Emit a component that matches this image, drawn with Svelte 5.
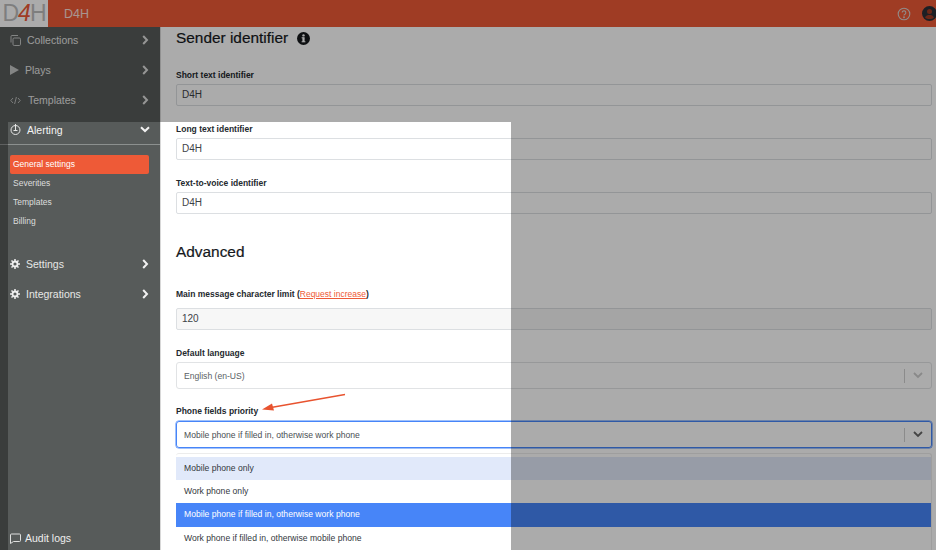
<script>
  const top = [
    { label: 'Collections', icon: 'copy' },
    { label: 'Plays', icon: 'play' },
    { label: 'Templates', icon: 'code' }
  ];
  const subs = ['General settings', 'Severities', 'Templates', 'Billing'];
  const options = [
    { t: 'Mobile phone only', c: 'hover' },
    { t: 'Work phone only', c: '' },
    { t: 'Mobile phone if filled in, otherwise work phone', c: 'sel' },
    { t: 'Work phone if filled in, otherwise mobile phone', c: '' }
  ];
  const lower = ['Settings', 'Integrations'];
</script>

<div class="page">
  <header class="topbar">
    <div class="logo"><span>D</span><span class="four">4</span><span>H</span></div>
    <div class="org">D4H</div>
    <div class="spacer"></div>
    <svg class="help" width="14" height="14" viewBox="0 0 14 14" fill="none" stroke="#d9cfcb" stroke-width="1.1">
      <circle cx="7" cy="7" r="5.8" />
      <path d="M5.2 5.6a1.8 1.8 0 1 1 2.7 1.6c-.6.3-.9.7-.9 1.3" />
      <circle cx="7" cy="10.2" r=".4" />
    </svg>
    <svg class="user" width="15" height="15" viewBox="0 0 15 15">
      <circle cx="7.5" cy="7.5" r="7.5" fill="#2b2f36" />
      <circle cx="7.5" cy="5.6" r="2.5" fill="#9f3b24" />
      <path d="M3 11.4c1-1.7 2.6-2.3 4.5-2.3s3.500.6 4.500 2.300c-1.100 1.100-2.700 1.700-4.500 1.700s-3.400-.6-4.500-1.700z" fill="#9f3b24" />
    </svg>
  </header>

  <div class="body">
    <nav class="side">
      {#each top as item}
        <div class="item">
          <span class="ic">
            {#if item.icon === 'copy'}
              <svg width="11" height="11" viewBox="0 0 11 11" fill="none" stroke="#c4c6c5" stroke-width="1"><rect x="3" y="3" width="7.500" height="7.500" rx="1.200" /><path d="M1 7.500V1.500a1 1 0 0 1 1-1h6" /></svg>
            {:else if item.icon === 'play'}
              <svg width="9" height="10" viewBox="0 0 9 10"><path d="M0 0l9 5-9 5z" fill="#c4c6c5" /></svg>
            {:else}
              <svg width="11" height="9" viewBox="0 0 11 9" fill="none" stroke="#c4c6c5" stroke-width=".9"><path d="M3 2L.8 4.500 3 7M8 2l2.200 2.500L8 7M6.400 1L4.600 8" /></svg>
            {/if}
          </span>
          <span class="lbl" class:plays={item.icon === 'play'} class:tpl={item.icon === 'code'}>{item.label}</span>
          <svg class="chev" width="7" height="10" viewBox="0 0 7 10" fill="none" stroke="#dfe0df" stroke-width="2"><path d="M1.200 1l3.800 4-3.800 4" /></svg>
        </div>
      {/each}
      <div class="item open">
        <span class="ic">
          <svg width="11" height="11" viewBox="0 0 11 11" fill="none" stroke="#e6e7e6" stroke-width="1"><circle cx="5.500" cy="6" r="4.500" /><path d="M5.500 0v6M3.500 6.500h4" /></svg>
        </span>
        <span class="lbl">Alerting</span>
        <svg class="chev down" width="10" height="7" viewBox="0 0 10 7" fill="none" stroke="#f2f2f2" stroke-width="2"><path d="M1 1.200l4 3.800 4-3.800" /></svg>
      </div>
      <div class="subs">
        {#each subs as s, i}
          <div class="sub" class:active={i === 0}>{s}</div>
        {/each}
      </div>
      {#each lower as l}
        <div class="item">
          <span class="ic gear">
            <svg width="10" height="10" viewBox="0 0 10 10" fill="none" stroke="#f0f0f0">
              <circle cx="5" cy="5" r="2.500" stroke-width="1.800" />
              <path d="M5 0v2M5 8v2M0 5h2M8 5h2M1.500 1.500l1.300 1.300M7.200 7.200l1.300 1.300M8.500 1.500L7.200 2.800M2.800 7.200L1.500 8.500" stroke-width="1.500" />
            </svg>
          </span>
          <span class="lbl">{l}</span>
          <svg class="chev" width="7" height="10" viewBox="0 0 7 10" fill="none" stroke="#f2f2f2" stroke-width="2"><path d="M1.200 1l3.800 4-3.800 4" /></svg>
        </div>
      {/each}
      <div class="audit">
        <svg width="11" height="11" viewBox="0 0 11 11" fill="none" stroke="#dfe0df" stroke-width="1"><path d="M1.500 1h8a1 1 0 0 1 1 1v5.500a1 1 0 0 1-1 1H3.500L.5 10.500V2a1 1 0 0 1 1-1z" /></svg>
        <span>Audit logs</span>
      </div>
    </nav>

    <main class="main">
      <h2 class="sender">Sender identifier
        <svg width="13" height="13" viewBox="0 0 13 13"><circle cx="6.500" cy="6.500" r="6.500" fill="#15181c" /><rect x="5.400" y="5.500" width="2.200" height="4.500" fill="#fff" /><rect x="4.600" y="9.300" width="3.800" height="1" fill="#fff" /><rect x="4.600" y="5.300" width="2.800" height="1" fill="#fff" /><circle cx="6.500" cy="3.400" r="1.200" fill="#fff" /></svg>
      </h2>

      <div class="label first">Short text identifier</div>
      <div class="input">D4H</div>
      <div class="label">Long text identifier</div>
      <div class="input">D4H</div>
      <div class="label">Text-to-voice identifier</div>
      <div class="input">D4H</div>

      <h2 class="advanced">Advanced</h2>

      <div class="label limit">Main message character limit (<span class="link">Request increase</span>)</div>
      <div class="input ro">120</div>

      <div class="label lang">Default language</div>
      <div class="select">
        <span class="val">English (en-US)</span>
        <span class="sep"></span>
        <svg class="arrow" width="10" height="7" viewBox="0 0 10 7" fill="none" stroke="#cccccc" stroke-width="1.800"><path d="M1 1l4 4 4-4" /></svg>
      </div>

      <div class="label phone">Phone fields priority</div>
      <div class="select focus">
        <span class="val">Mobile phone if filled in, otherwise work phone</span>
        <span class="sep"></span>
        <svg class="arrow" width="10" height="7" viewBox="0 0 10 7" fill="none" stroke="#666666" stroke-width="1.800"><path d="M1 1l4 4 4-4" /></svg>
      </div>

      <div class="menu">
        {#each options as o}
          <div class="opt {o.c}">{o.t}</div>
        {/each}
      </div>
    </main>
  </div>

  <div class="dim dim-top"></div>
  <div class="dim dim-left"></div>
  <div class="dim dim-right"></div>

  <svg class="callout" width="90" height="24" viewBox="0 0 90 24">
    <path d="M84 1.500L10 14.500" stroke="#e8532f" stroke-width="1.300" fill="none" />
    <path d="M1 16.500L11 10.500 13 17.500z" fill="#e8532f" />
  </svg>
</div>

<style>
  :global(body) {
    margin: 0;
    background: #fff;
  }
  .page {
    position: relative;
    width: 936px;
    height: 550px;
    overflow: hidden;
    font-family: "Liberation Sans", Arial, sans-serif;
    color: #24292e;
    background: #fff;
  }
  .topbar {
    display: flex;
    align-items: center;
    height: 27px;
    background: #ee5a37;
  }
  .logo {
    width: 48px;
    height: 27px;
    background: #fff;
    display: flex;
    align-items: center;
    justify-content: center;
    font-size: 23px;
    font-weight: 400;
    letter-spacing: -1px;
    color: #bdbdbd;
  }
  .four {
    color: #ee5a37;
    font-style: italic;
  }
  .org {
    margin-left: 16px;
    font-size: 12.500px;
    color: #fff;
    opacity: .8;
  }
  .spacer { flex: 1; }
  .help { margin-right: 10px; }
  .user { margin-right: 0; transform: translateX(1px); }

  .body {
    display: flex;
    height: 523px;
  }
  .side {
    position: relative;
    width: 161px;
    flex: none;
    background: #575b5a;
    border-right: 1px solid #d8d8d8;
    box-sizing: border-box;
    color: #e6e7e6;
    font-size: 10.500px;
  }
  .item {
    display: flex;
    align-items: center;
    height: 30px;
    padding-left: 10px;
  }
  .item:first-child { margin-top: -2px; }
  .item .ic {
    width: 17px;
    display: flex;
    align-items: center;
  }
  .item .lbl { flex: 1; }
  .item .lbl.plays { margin-left: -2px; }
  .item .lbl.tpl { margin-left: 1px; }
  .chev { margin-right: 11px; }
  .chev.down { margin-right: 10px; }
  .item.open {
    height: 29px;
    color: #f4f4f4;
    border-bottom: 1px solid #8c908f;
    font-weight: 500;
  }
  .subs {
    padding: 10px 10px 0 10px;
    height: 88px;
    box-sizing: border-box;
    margin-bottom: 16px;
  }
  .sub {
    height: 19px;
    line-height: 19px;
    padding-left: 3px;
    font-size: 8.500px;
    color: #dcdddc;
  }
  .sub.active {
    background: #ee5a37;
    color: #fff;
    border-radius: 2px;
    width: 139px;
    box-sizing: border-box;
  }
  .gear {
    width: 16px !important;
  }
  .audit {
    position: absolute;
    left: 10px;
    bottom: 6px;
    display: flex;
    align-items: center;
    gap: 4px;
    font-size: 10.500px;
    color: #eeeeee;
  }

  .main {
    flex: 1;
    padding: 0 4px 0 15px;
    min-width: 0;
  }
  h2 {
    margin: 0;
    font-weight: 400;
    color: #15181c;
    -webkit-text-stroke: .2px #15181c;
  }
  .sender {
    display: flex;
    align-items: center;
    gap: 9px;
    height: 22px;
    line-height: 22px;
    font-size: 15.400px;
  }
  .label {
    font-size: 8.500px;
    font-weight: 700;
    line-height: 12px;
    margin-top: 17px;
    margin-bottom: 3px;
    color: #24292e;
  }
  .label.first { margin-top: 20px; }
  .input {
    height: 22px;
    line-height: 20px;
    box-sizing: border-box;
    border: 1px solid #dcdfe2;
    border-radius: 2px;
    padding-left: 5px;
    font-size: 10px;
    color: #3d4247;
  }
  .input.ro { background: #f7f7f7; }
  .advanced {
    margin-top: 27px;
    font-size: 15.400px;
    line-height: 22px;
  }
  .label.limit { margin-top: 25px; margin-bottom: 8px; }
  .link {
    color: #ee5a37;
    text-decoration: underline;
    font-weight: 400;
  }
  .label.lang { margin-top: 17px; margin-bottom: 3px; }
  .select {
    display: flex;
    align-items: center;
    height: 27px;
    box-sizing: border-box;
    border: 1px solid #e1e3e5;
    border-radius: 3px;
    padding-left: 7px;
    font-size: 8.600px;
    color: #5a5f64;
  }
  .val { flex: 1; }
  .sep {
    width: 1px;
    height: 14px;
    background: #d0d0d0;
    margin-right: 8px;
  }
  .arrow { margin-right: 8px; }
  .label.phone { margin-top: 16px; margin-bottom: 4px; }
  .select.focus {
    border: 1px solid #4785f8;
    box-shadow: 0 0 0 .5px #4785f8;
    color: #4a4f54;
  }
  .menu {
    margin-top: 5px;
    border: 1px solid #ececec;
    border-bottom: 0;
    border-left: 0;
    border-radius: 3px 3px 0 0;
    padding-top: 2.700px;
  }
  .opt {
    height: 23.300px;
    line-height: 23.300px;
    padding-left: 8px;
    font-size: 8.600px;
    color: #33383d;
  }
  .opt.hover { background: #e1e9fa; }
  .opt.sel { background: #4785f8; color: #fff; }

  .dim {
    position: absolute;
    background: rgba(0, 0, 0, .33);
  }
  .dim-top { left: 0; top: 0; right: 0; height: 122px; }
  .dim-left { left: 0; top: 122px; width: 8px; bottom: 0; }
  .dim-right { left: 511px; top: 122px; right: 0; bottom: 0; }
  .callout {
    position: absolute;
    left: 261px;
    top: 393px;
  }
</style>
